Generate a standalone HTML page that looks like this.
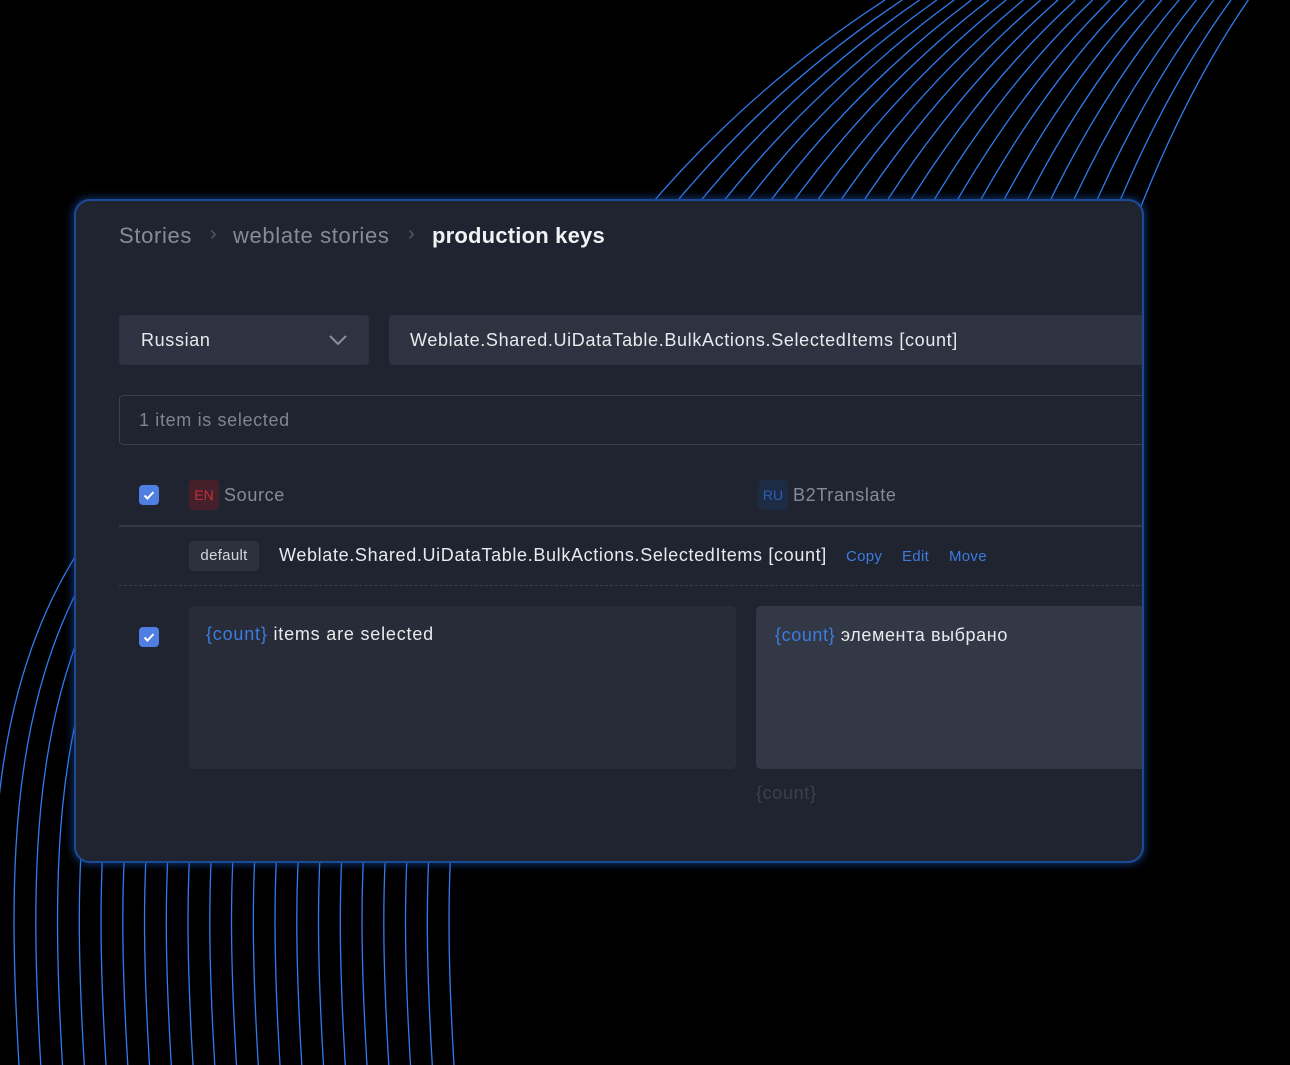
<!DOCTYPE html>
<html><head><meta charset="utf-8"><style>
*{margin:0;padding:0;box-sizing:border-box}
body{width:1290px;height:1065px;background:#000;position:relative;overflow:hidden;font-family:"Liberation Sans",sans-serif}
svg.bg{position:absolute;left:0;top:0}
.card{position:absolute;left:74px;top:199px;width:1070px;height:664px;background:#1f2430;border:2px solid #1d4a96;border-radius:16px;box-shadow:0 0 8px 2px rgba(30,80,170,.55);overflow:hidden}
.a{position:absolute;white-space:nowrap;letter-spacing:0.65px}
</style></head><body>
<svg class="bg" width="1290" height="1065">
<g fill="none" stroke="#2f7cf0" stroke-width="1.3">
<path id="L" d="M19 1065 C8 880 10 720 80 585 C130 490 200 430 300 380"/>
<use href="#L" x="-21"/>
<use href="#L" x="21.8"/><use href="#L" x="43.5"/><use href="#L" x="65.3"/><use href="#L" x="87"/><use href="#L" x="108.8"/><use href="#L" x="130.5"/><use href="#L" x="152.3"/><use href="#L" x="174"/><use href="#L" x="195.8"/><use href="#L" x="217.5"/><use href="#L" x="239.3"/><use href="#L" x="261"/><use href="#L" x="282.8"/><use href="#L" x="304.5"/><use href="#L" x="326.3"/><use href="#L" x="348"/><use href="#L" x="369.8"/><use href="#L" x="391.5"/><use href="#L" x="413.3"/><use href="#L" x="435"/>
</g>
<g fill="none" stroke="#2f7cf0" stroke-width="1.3" id="TR"></g>
</svg>
<script>
(function(){var g=document.getElementById('TR'),s='';for(var j=0;j<22;j++){var xb=646+23.6*j,xt=885+17.3*j,dx=xt-xb;var yb=215;s+='<path d="M'+(xb-4)+' '+yb+' Q'+(xb+0.42*dx)+' 90 '+xt+' 0"/>';}g.innerHTML=s;})();
</script>
<div class="card">
<div class="a" style="left:43px;top:22px;font-size:22px;color:#868c97">Stories</div>
<div class="a" style="left:134px;top:22px;font-size:20px;color:#555b66">›</div>
<div class="a" style="left:157px;top:22px;font-size:22px;color:#868c97">weblate stories</div>
<div class="a" style="left:332px;top:22px;font-size:20px;color:#555b66">›</div>
<div class="a" style="left:356px;top:22px;font-size:22px;color:#f0f2f4;font-weight:bold;letter-spacing:0.2px">production keys</div>

<div class="a" style="left:43px;top:114px;width:250px;height:50px;background:#2d3340;border-radius:4px"></div>
<div class="a" style="left:65px;top:129px;font-size:18px;color:#e8eaed">Russian</div>
<svg class="a" style="left:252px;top:133px" width="20" height="12"><path d="M2 2 L10 10 L18 2" fill="none" stroke="#8a909b" stroke-width="2"/></svg>
<div class="a" style="left:313px;top:114px;width:760px;height:50px;background:#2d3340;border-radius:4px"></div>
<div class="a" style="left:334px;top:129px;font-size:18px;color:#e8eaed">Weblate.Shared.UiDataTable.BulkActions.SelectedItems [count]</div>

<div class="a" style="left:43px;top:194px;width:1040px;height:50px;border:1px solid #3a404c;border-radius:4px"></div>
<div class="a" style="left:63px;top:209px;font-size:18px;color:#7f8590">1 item is selected</div>

<div class="a" style="left:63px;top:284px;width:20px;height:20px;background:#4f7fe0;border-radius:4px"><svg width="20" height="20"><path d="M5.5 10.5 L8.5 13.5 L14.5 7" fill="none" stroke="#fff" stroke-width="2"/></svg></div>
<div class="a" style="left:113px;top:279px;width:30px;height:30px;background:#45202a;border-radius:4px;color:#c2313c;font-size:14px;line-height:30px;text-align:center;letter-spacing:0">EN</div>
<div class="a" style="left:148px;top:284px;font-size:18px;color:#868c97">Source</div>
<div class="a" style="left:682px;top:279px;width:30px;height:30px;background:#1e2b44;border-radius:4px;color:#2e5fb3;font-size:14px;line-height:30px;text-align:center;letter-spacing:0">RU</div>
<div class="a" style="left:717px;top:284px;font-size:18px;color:#868c97">B2Translate</div>
<div class="a" style="left:43px;top:324px;width:1040px;height:2px;background:#343a46"></div>

<div class="a" style="left:113px;top:340px;width:70px;height:30px;background:#2b313d;border-radius:4px;color:#d4d7dc;font-size:15px;line-height:30px;text-align:center;letter-spacing:0.3px">default</div>
<div class="a" style="left:203px;top:344px;font-size:18px;color:#e8eaed">Weblate.Shared.UiDataTable.BulkActions.SelectedItems [count]</div>
<div class="a" style="left:770px;top:347px;font-size:15px;color:#3c7be0;letter-spacing:0.3px">Copy</div>
<div class="a" style="left:826px;top:347px;font-size:15px;color:#3c7be0;letter-spacing:0.3px">Edit</div>
<div class="a" style="left:873px;top:347px;font-size:15px;color:#3c7be0;letter-spacing:0.3px">Move</div>
<div class="a" style="left:43px;top:384px;width:1040px;border-top:1px dashed #3a404c"></div>

<div class="a" style="left:63px;top:426px;width:20px;height:20px;background:#4f7fe0;border-radius:4px"><svg width="20" height="20"><path d="M5.5 10.5 L8.5 13.5 L14.5 7" fill="none" stroke="#fff" stroke-width="2"/></svg></div>
<div class="a" style="left:113px;top:405px;width:547px;height:163px;background:#282c38;border-radius:5px"></div>
<div class="a" style="left:130px;top:423px;font-size:18px;color:#e8eaed;letter-spacing:0.8px"><span style="color:#3c7be0">{count}</span> items are selected</div>
<div class="a" style="left:680px;top:405px;width:420px;height:163px;background:#323846;border-radius:5px"></div>
<div class="a" style="left:699px;top:424px;font-size:18px;color:#e8eaed;letter-spacing:0.6px"><span style="color:#3c7be0">{count}</span> элемента выбрано</div>
<div class="a" style="left:680px;top:582px;font-size:18px;color:#3a404c">{count}</div>
</div>
</body></html>
